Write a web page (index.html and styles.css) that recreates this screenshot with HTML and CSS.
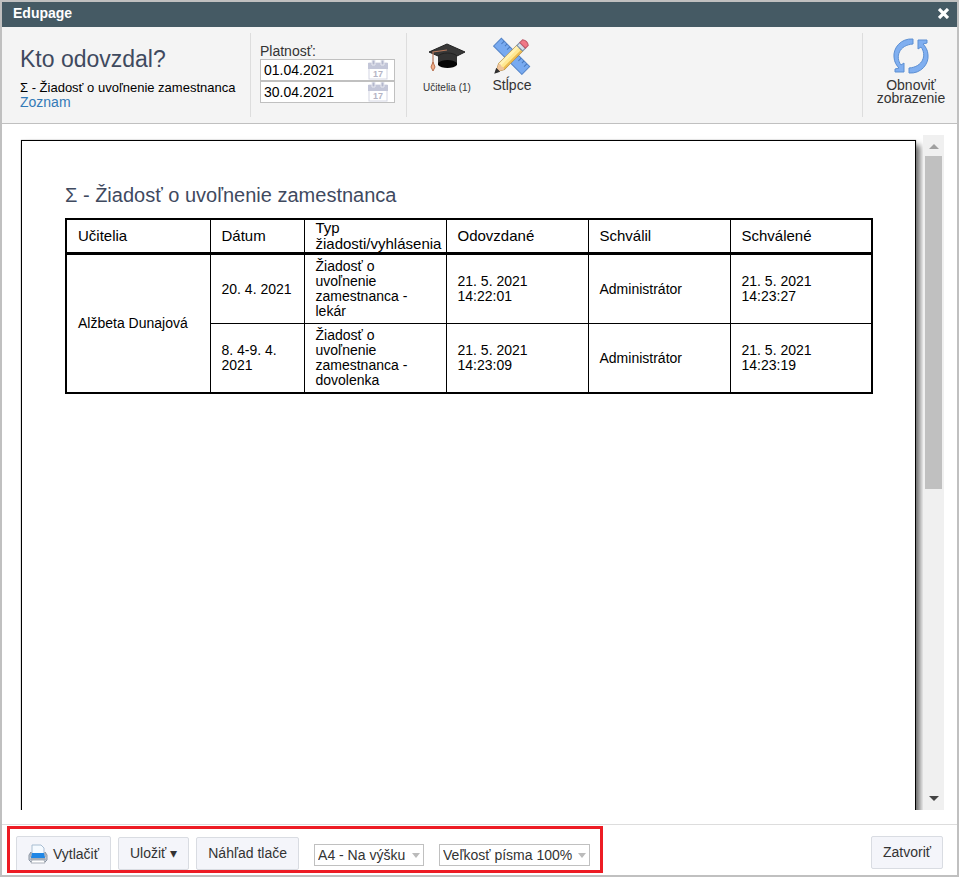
FILE: index.html
```html
<!DOCTYPE html>
<html lang="sk">
<head>
    <meta charset="UTF-8">
    <meta name="viewport" content="width=device-width, initial-scale=1.0">
    <title>Edupage</title>
    <link rel="stylesheet" href="styles.css">
</head>
<body>
    <div class="window">
        <div class="titlebar">
            <span>Edupage</span>
            <button type="button" class="close" aria-label="Zavrieť">
                <svg width="11" height="11" viewBox="0 0 11 11"><path d="M1 1L10 10M10 1L1 10" stroke="#fff" stroke-width="3.2"/></svg>
            </button>
        </div>

        <header class="header">
            <div class="heading">
                <h1>Kto odovzdal?</h1>
                <div>Σ - Žiadosť o uvoľnenie zamestnanca</div>
                <a href="#">Zoznam</a>
            </div>
            <div class="validity">
                <label for="dateFrom">Platnosť:</label>
                <div class="date">
                    <input type="text" id="dateFrom" value="01.04.2021">
                    <svg width="20" height="20" viewBox="0 0 20 20">
                        <rect x="1" y="3" width="18" height="16" fill="#fff" stroke="#d4d6e3"/>
                        <path d="M0 3h20v6H0z" fill="#c3c6d8"/>
                        <path d="M4 0h3v5H4zM13 0h3v5h-3z" fill="#b4b8cd" stroke="#e8e9f0"/>
                        <text x="10" y="17" class="day">17</text>
                    </svg>
                </div>
                <div class="date">
                    <input type="text" id="dateTo" value="30.04.2021" aria-label="Platnosť do">
                    <svg width="20" height="20" viewBox="0 0 20 20">
                        <rect x="1" y="3" width="18" height="16" fill="#fff" stroke="#d4d6e3"/>
                        <path d="M0 3h20v6H0z" fill="#c3c6d8"/>
                        <path d="M4 0h3v5H4zM13 0h3v5h-3z" fill="#b4b8cd" stroke="#e8e9f0"/>
                        <text x="10" y="17" class="day">17</text>
                    </svg>
                </div>
            </div>
            <div class="tools">
                <button type="button" class="tool small">
                    <svg width="38" height="38" viewBox="0 0 38 38">
                        <path d="M10 15v13c3 4 16 4 19 0V15z" fill="#050505"/>
                        <path d="M10 18c4-4 15-4 19 0v8c-4-4-15-4-19 0z" fill="#333"/>
                        <path d="M1 15L19 7l18 8-8 4c-4-4-15-4-19 0z" fill="#383838" stroke="#222"/>
                        <path d="M19 13L5 15v12" fill="none" stroke="#b7795c" stroke-width="1.2"/>
                        <path d="M5 25l2 5-2 4-2-4z" fill="#f3b08c" stroke="#b7704f"/>
                    </svg>
                    <span>Učitelia (1)</span>
                </button>
                <button type="button" class="tool">
                    <svg width="38" height="38" viewBox="0 0 38 38">
                        <g transform="rotate(45 19 19)">
                            <rect x="-1" y="14" width="40" height="11" fill="#78aaf0" stroke="#5484c8"/>
                            <path d="M3 14v4M7 14v3M11 14v4M15 14v3M19 14v4M23 14v3M27 14v4M31 14v3M35 14v4" stroke="#4878bd"/>
                        </g>
                        <g transform="rotate(-45 19 19)">
                            <path d="M4 15h26v8H4l-7-4z" fill="#ffe891" stroke="#a87e34"/>
                            <path d="M4 15h26v3H4z" fill="#fff2b5"/>
                            <path d="M4 21h26v2H4z" fill="#edbd51"/>
                            <path d="M4 15l-8 4 8 4 1-2-1-2 1-2z" fill="#efc49b"/>
                            <path d="M-1 17l-4 2 4 2z" fill="#303030" stroke="#303030"/>
                            <rect x="30" y="15" width="4" height="8" fill="#d4dfeb" stroke="#7890a8"/>
                            <path d="M34 15h4q3 4 0 8h-4z" fill="#f07887" stroke="#bd5969"/>
                        </g>
                    </svg>
                    <span>Stĺpce</span>
                </button>
            </div>
            <div class="refresh">
                <button type="button" class="tool">
                    <svg width="38" height="38" viewBox="0 0 38 38">
                        <g fill="#80aff0" stroke="#5c8fd2">
                            <path id="arc" d="M21 2C9 1 1 11 2 20c0 5 3 9 5 11l-4 1v3h9v-9l-3 2C3 20 7 8 21 7z"/>
                            <use href="#arc" transform="rotate(180 19 19)"/>
                        </g>
                    </svg>
                    <span>Obnoviť<br>zobrazenie</span>
                </button>
            </div>
        </header>

        <main class="content">
            <div class="viewport">
                <div class="sheet">
                    <h2>Σ - Žiadosť o uvoľnenie zamestnanca</h2>
                    <table class="data">
                        <thead>
                            <tr>
                                <th class="teacher">Učitelia</th>
                                <th class="day-col">Dátum</th>
                                <th>Typ žiadosti/vyhlásenia</th>
                                <th>Odovzdané</th>
                                <th>Schválil</th>
                                <th>Schválené</th>
                            </tr>
                        </thead>
                        <tbody>
                            <tr>
                                <td rowspan="2">Alžbeta Dunajová</td>
                                <td>20. 4. 2021</td>
                                <td>Žiadosť o uvoľnenie zamestnanca - lekár</td>
                                <td>21. 5. 2021 14:22:01</td>
                                <td>Administrátor</td>
                                <td>21. 5. 2021 14:23:27</td>
                            </tr>
                            <tr>
                                <td>8. 4-9. 4. 2021</td>
                                <td>Žiadosť o uvoľnenie zamestnanca - dovolenka</td>
                                <td>21. 5. 2021 14:23:09</td>
                                <td>Administrátor</td>
                                <td>21. 5. 2021 14:23:19</td>
                            </tr>
                        </tbody>
                    </table>
                </div>
            </div>
            <div class="scrollbar">
                <span class="arrow up"></span>
                <div class="track"><div class="thumb"></div></div>
                <span class="arrow down"></span>
            </div>
        </main>

        <footer class="footer">
            <div class="actions">
                <button type="button" class="button print">
                    <svg width="20" height="20" viewBox="0 0 20 20">
                        <path d="M4 1h9l3 3v7H4z" fill="#f5faff" stroke="#a8bdd2"/>
                        <path d="M3 8L1 11v5l2 2h14l2-2v-5l-2-3v5H3z" fill="#c6ccd5" stroke="#8b95a3"/>
                        <path d="M4 9h12l1 5H3z" fill="#1f86e5"/>
                        <path d="M3 14h14l1 2H2z" fill="#a4abb5"/>
                        <path d="M4 16h12l1 3H3z" fill="#fff" stroke="#aab0b9"/>
                    </svg>
                    Vytlačiť
                </button>
                <button type="button" class="button">Uložiť ▾</button>
                <button type="button" class="button">Náhľad tlače</button>
                <div class="select paper">
                    <select aria-label="Formát papiera"><option>A4 - Na výšku</option></select>
                </div>
                <div class="select size">
                    <select aria-label="Veľkosť písma"><option>Veľkosť písma 100%</option></select>
                </div>
            </div>
            <button type="button" class="button">Zatvoriť</button>
        </footer>
    </div>
</body>
</html>
```
FILE: styles.css
```css
* {
    box-sizing: border-box;
}
body {
    margin: 0;
    background-color: #fff;
    color: #000;
    font-family: "Liberation Sans", Arial, sans-serif;
    font-size: 14px;
    line-height: 15px;
}
button, input, select {
    font: inherit;
    color: inherit;
}
button {
    cursor: pointer;
}
svg {
    display: block;
    flex-shrink: 0;
}
.window {
    display: flex;
    flex-direction: column;
    height: 100vh;
    border: 2px solid #c0c0c0;
}
.titlebar {
    display: flex;
    justify-content: space-between;
    align-items: center;
    padding: 0 8px 3px 11px;
    height: 25px;
    background-color: #455a64;
    color: #fff;
    font-weight: bold;
}
.close {
    padding: 0;
    border: none;
    background: none;
}
.header {
    display: flex;
    padding: 6px 0;
    background-color: #f4f4f4;
    border-bottom: 1px solid #c0c0c0;
}
.heading {
    width: 249px;
    padding: 12px 0 0 18px;
    border-right: 1px solid #ddd;
    font-size: 13px;
    white-space: nowrap;
}
h1 {
    margin: 0 0 7px;
    color: #3f4a5f;
    font-size: 23px;
    font-weight: normal;
    line-height: 28px;
}
a {
    color: #337ab7;
    font-size: 14px;
    text-decoration: none;
}
.validity {
    width: 156px;
    padding: 11px 11px 0 9px;
    border-right: 1px solid #ddd;
    color: #333;
}
.validity label {
    display: block;
}
.date {
    position: relative;
}
.date input {
    display: block;
    width: 100%;
    height: 22px;
    padding: 0 3px 1px;
    border: 1px solid #c0c0c0;
    background-color: #fff;
    color: #000;
}
.date svg {
    position: absolute;
    top: 1px;
    right: 7px;
}
.day {
    fill: #b4b4c4;
    font-size: 9px;
    font-weight: bold;
    text-anchor: middle;
}
.tools {
    display: flex;
    flex: 1;
    padding-left: 10px;
}
.tool {
    display: flex;
    flex-direction: column;
    align-items: center;
    gap: 4px;
    width: 60px;
    height: 84px;
    margin-right: 5px;
    padding: 4px 0 0;
    border: none;
    background: none;
    color: #333;
    line-height: 13px;
    white-space: nowrap;
}
.small {
    gap: 6px;
    font-size: 10px;
}
.refresh {
    padding-left: 13px;
    border-left: 1px solid #ddd;
}
.refresh .tool {
    width: 70px;
    margin-right: 11px;
}
.content {
    display: flex;
    flex: 1;
    min-height: 0;
    padding: 11px 13px 14px 18px;
}
.viewport {
    flex: 1;
    overflow: hidden;
    padding: 5px 7px 0 1px;
}
.sheet {
    height: 1200px;
    padding: 42px 42px 0 43px;
    border: 1px solid #000;
    background-color: #fff;
    box-shadow: 4px 5px 6px #666, 0 0 1px #888;
}
h2 {
    margin: 0 0 11px;
    color: #3f4a5f;
    font-size: 20px;
    font-weight: normal;
    line-height: 24px;
}
table.data {
    width: 100%;
    table-layout: fixed;
    border-collapse: collapse;
    border: 2px solid #000;
}
table.data th, table.data td {
    border: 1px solid #000;
    padding: 4px 11px;
    text-align: left;
}
table.data th {
    padding: 0 0 0 11px;
    border-bottom: 3px solid #000;
    font-size: 15px;
    font-weight: normal;
    line-height: 16px;
}
table.data .teacher {
    width: 144px;
}
table.data .day-col {
    width: 94px;
}
.scrollbar {
    display: flex;
    flex-direction: column;
    width: 21px;
    background-color: #f0f0f0;
}
.arrow {
    width: 10px;
    margin: 0 auto;
    border: 5px solid transparent;
}
.up {
    margin-top: 4px;
    margin-bottom: 7px;
    border-bottom-color: #a0a0a0;
}
.down {
    margin-bottom: 4px;
    border-top-color: #444;
}
.track {
    flex: 1;
}
.thumb {
    height: 52%;
    margin: 0 2px;
    background-color: #c0c0c0;
}
.footer {
    display: flex;
    justify-content: space-between;
    align-items: flex-start;
    height: 51px;
    padding-right: 14px;
    border-top: 1px solid #ddd;
}
.actions {
    position: relative;
    display: flex;
    align-items: flex-start;
    gap: 7px;
    height: 47px;
    margin: 1px 0 0 5px;
    padding: 11px 13px 0 9px;
    overflow: hidden;
}
.actions::after {
    content: "";
    position: absolute;
    inset: 0;
    border: 3px solid #ed1c24;
    pointer-events: none;
}
.button {
    display: flex;
    align-items: center;
    height: 33px;
    padding: 0 11px;
    border: 1px solid #d9dce2;
    border-radius: 2px;
    background-color: #f4f5fa;
    color: #333;
    white-space: nowrap;
}
.print {
    gap: 5px;
    height: 36px;
    margin-top: -1px;
}
.footer > .button {
    margin-top: 11px;
}
.select {
    position: relative;
    margin: 7px 0 0 8px;
}
.select select {
    appearance: none;
    display: block;
    width: 100%;
    height: 22px;
    padding: 0 3px;
    border: 1px solid #c0c0c0;
    border-radius: 0;
    background-color: #fff;
    color: #333;
}
.select::after {
    content: "";
    position: absolute;
    top: 9px;
    right: 4px;
    border: 4px solid transparent;
    border-top: 5px solid #bbb;
    border-bottom: none;
    pointer-events: none;
}
.paper {
    width: 110px;
}
.size {
    width: 151px;
}
```
